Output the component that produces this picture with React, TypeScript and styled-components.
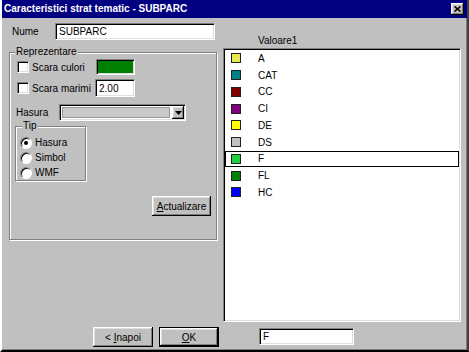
import React from "react";
import styled, { createGlobalStyle, css } from "styled-components";

const Global = createGlobalStyle`
  html, body { margin: 0; padding: 0; background: #c0c0c0; }
  #root { width: 469px; height: 352px; }
`;

const sunken = css`
  box-sizing: border-box;
  border-style: solid;
  border-width: 1px;
  border-color: #808080 #ffffff #ffffff #808080;
  box-shadow: inset 1px 1px 0 #000000, inset -1px -1px 0 #dfdfdf;
`;

const raised = css`
  box-sizing: border-box;
  border: none;
  background: #c0c0c0;
  box-shadow: inset -1px -1px 0 #000000, inset 1px 1px 0 #ffffff,
    inset -2px -2px 0 #808080, inset 2px 2px 0 #dfdfdf;
`;

const Window = styled.div`
  width: 469px;
  height: 352px;
  box-sizing: border-box;
  background: #c0c0c0;
  border-left: 2px solid #ffffff;
  border-right: 2px solid #404040;
  border-bottom: 2px solid #000000;
  box-shadow: inset 0 -1px 0 #808080, inset -1px 0 0 #808080;
  display: flex;
  flex-direction: column;
  overflow: hidden;
  font-family: "Liberation Sans", Arial, sans-serif;
  font-size: 10px;
  color: #000;
`;

const TitleBar = styled.div`
  height: 18px;
  flex: none;
  background: #000080;
  display: flex;
  align-items: center;
  justify-content: space-between;
  padding: 0 3px 0 2px;
`;

const TitleText = styled.span`
  color: #ffffff;
  font-weight: bold;
  font-size: 10px;
  line-height: 18px;
`;

const CloseButton = styled.div`
  ${raised};
  width: 13px;
  height: 12px;
  display: flex;
  align-items: center;
  justify-content: center;
`;

const Body = styled.div`
  display: flex;
  padding: 5px 0 0 7px;
`;

const LeftCol = styled.div`
  width: 208px;
  display: flex;
  flex-direction: column;
`;

const NumeRow = styled.div`
  display: flex;
  align-items: center;
  height: 17px;
  padding-left: 3px;
`;

const Label = styled.span<{ $w?: number; $ml?: number }>`
  width: ${(p) => (p.$w ? `${p.$w}px` : "auto")};
  margin-left: ${(p) => p.$ml ?? 0}px;
  flex: none;
  white-space: nowrap;
`;

const TextInput = styled.div<{ $w: number; $h: number }>`
  ${sunken};
  width: ${(p) => p.$w}px;
  height: ${(p) => p.$h}px;
  background: #ffffff;
  padding-left: 3px;
  display: flex;
  align-items: center;
  flex: none;
`;

const Group = styled.div<{ $pt: number; $pl: number; $pb: number }>`
  position: relative;
  box-sizing: border-box;
  border: 1px solid #808080;
  box-shadow: inset 1px 1px 0 #ffffff, 1px 1px 0 #ffffff;
  padding: ${(p) => p.$pt}px 4px ${(p) => p.$pb}px ${(p) => p.$pl}px;
  display: flex;
  flex-direction: column;
`;

const Legend = styled.span<{ $left: number }>`
  position: absolute;
  top: -7px;
  left: ${(p) => p.$left}px;
  background: #c0c0c0;
  padding: 0 1px;
  line-height: 12px;
`;

const ReprGroup = styled(Group)`
  margin-top: 12px;
`;

const FieldRow = styled.div<{ $h: number; $mt: number }>`
  display: flex;
  align-items: center;
  height: ${(p) => p.$h}px;
  margin-top: ${(p) => p.$mt}px;
`;

const CheckBox = styled.div`
  ${sunken};
  width: 12px;
  height: 12px;
  background: #ffffff;
  margin-left: 1px;
  flex: none;
`;

const Swatch = styled.div<{ $color: string }>`
  ${sunken};
  width: 39px;
  height: 16px;
  background: ${(p) => p.$color};
  flex: none;
`;

const Combo = styled.div`
  ${sunken};
  width: 127px;
  height: 17px;
  background: #ffffff;
  padding: 2px;
  display: flex;
  gap: 2px;
  flex: none;
`;

const ComboField = styled.div`
  flex: 1;
  box-sizing: border-box;
  background: #c8c8c8;
  border: 1px solid #9a9a9a;
`;

const ComboButton = styled.div`
  ${raised};
  width: 12px;
  display: flex;
  align-items: center;
  justify-content: center;
  margin: -1px -1px -1px 0;
`;

const TipGroup = styled(Group)`
  margin-top: 5px;
  margin-left: -1px;
  width: 71px;
`;

const RadioRow = styled.div`
  display: flex;
  align-items: center;
  height: 15px;
`;

const Radio = styled.div<{ $checked?: boolean }>`
  box-sizing: border-box;
  width: 12px;
  height: 12px;
  border-radius: 50%;
  background: #ffffff;
  border: 1px solid;
  border-color: #808080 #ffffff #ffffff #808080;
  box-shadow: inset 1px 1px 0 #000000;
  display: flex;
  align-items: center;
  justify-content: center;
  flex: none;
  &::after {
    content: "";
    display: ${(p) => (p.$checked ? "block" : "none")};
    width: 4px;
    height: 4px;
    border-radius: 50%;
    background: #000000;
  }
`;

const ButtonRow = styled.div`
  display: flex;
  justify-content: flex-end;
  margin-top: 15px;
  padding-right: 1px;
`;

const Button = styled.div<{ $w: number; $default?: boolean }>`
  ${raised};
  width: ${(p) => p.$w}px;
  height: 20px;
  display: flex;
  align-items: center;
  justify-content: center;
  flex: none;
  ${(p) =>
    p.$default &&
    css`
      border: 1px solid #000000;
    `}
`;

const U = styled.span`
  text-decoration: underline;
`;

const RightCol = styled.div`
  margin-left: 6px;
  width: 238px;
  padding-top: 11px;
  display: flex;
  flex-direction: column;
`;

const ColumnHeader = styled.div`
  height: 14px;
  line-height: 14px;
  padding-left: 35px;
`;

const ListBox = styled.div`
  ${sunken};
  height: 274px;
  background: #ffffff;
  padding: 1px;
  display: flex;
  flex-direction: column;
`;

const ListRow = styled.div<{ $selected?: boolean }>`
  height: 16.75px;
  flex: none;
  display: flex;
  align-items: center;
  padding-left: 6px;
  ${(p) =>
    p.$selected &&
    css`
      outline: 1px solid #000000;
      outline-offset: -1px;
    `}
`;

const ItemSwatch = styled.div<{ $color: string }>`
  box-sizing: border-box;
  width: 10px;
  height: 10px;
  border: 1px solid #202020;
  background: ${(p) => p.$color};
  margin-right: 17px;
  flex: none;
`;

const BottomRow = styled.div`
  display: flex;
  align-items: flex-start;
  margin-top: 5px;
  padding-left: 91px;
  gap: 6px;
`;

const BottomField = styled(TextInput)`
  margin-left: 34px;
  margin-top: 1px;
`;

const items: { label: string; color: string }[] = [
  { label: "A", color: "#e8e850" },
  { label: "CAT", color: "#008080" },
  { label: "CC", color: "#800000" },
  { label: "CI", color: "#800080" },
  { label: "DE", color: "#ffff00" },
  { label: "DS", color: "#c0c0c0" },
  { label: "F", color: "#20d040" },
  { label: "FL", color: "#008000" },
  { label: "HC", color: "#0000ff" },
];

export default function App() {
  return (
    <>
      <Global />
      <Window>
        <TitleBar>
          <TitleText>Caracteristici strat tematic - SUBPARC</TitleText>
          <CloseButton>
            <svg width="7" height="6" viewBox="0 0 7 6">
              <path d="M0.5 0.5 L6.5 5.5 M6.5 0.5 L0.5 5.5" stroke="#000" strokeWidth="1.6" />
            </svg>
          </CloseButton>
        </TitleBar>
        <Body>
          <LeftCol>
            <NumeRow>
              <Label $w={43}>Nume</Label>
              <TextInput $w={160} $h={17}>SUBPARC</TextInput>
            </NumeRow>
            <ReprGroup $pt={6} $pl={6} $pb={23}>
              <Legend $left={5}>Reprezentare</Legend>
              <FieldRow $h={16} $mt={0}>
                <CheckBox />
                <Label $w={64} $ml={3}>Scara culori</Label>
                <Swatch $color="#008000" />
              </FieldRow>
              <FieldRow $h={18} $mt={4}>
                <CheckBox />
                <Label $w={63} $ml={3}>Scara marimi</Label>
                <TextInput $w={40} $h={18}>2.00</TextInput>
              </FieldRow>
              <FieldRow $h={17} $mt={7}>
                <Label $w={43}>Hasura</Label>
                <Combo>
                  <ComboField />
                  <ComboButton>
                    <svg width="7" height="4" viewBox="0 0 7 4">
                      <path d="M0 0 H7 L3.5 4 Z" fill="#000" />
                    </svg>
                  </ComboButton>
                </Combo>
              </FieldRow>
              <TipGroup $pt={8} $pl={4} $pb={0}>
                <Legend $left={6}>Tip</Legend>
                <RadioRow>
                  <Radio $checked />
                  <Label $ml={3}>Hasura</Label>
                </RadioRow>
                <RadioRow>
                  <Radio />
                  <Label $ml={3}>Simbol</Label>
                </RadioRow>
                <RadioRow>
                  <Radio />
                  <Label $ml={3}>WMF</Label>
                </RadioRow>
              </TipGroup>
              <ButtonRow>
                <Button $w={59}>
                  <span>
                    <U>A</U>ctualizare
                  </span>
                </Button>
              </ButtonRow>
            </ReprGroup>
          </LeftCol>
          <RightCol>
            <ColumnHeader>Valoare1</ColumnHeader>
            <ListBox>
              {items.map((it) => (
                <ListRow key={it.label} $selected={it.label === "F"}>
                  <ItemSwatch $color={it.color} />
                  {it.label}
                </ListRow>
              ))}
            </ListBox>
          </RightCol>
        </Body>
        <BottomRow>
          <Button $w={60}>
            <span>
              &lt; <U>I</U>napoi
            </span>
          </Button>
          <Button $w={60} $default>
            <span>
              <U>O</U>K
            </span>
          </Button>
          <BottomField $w={95} $h={17}>F</BottomField>
        </BottomRow>
      </Window>
    </>
  );
}
